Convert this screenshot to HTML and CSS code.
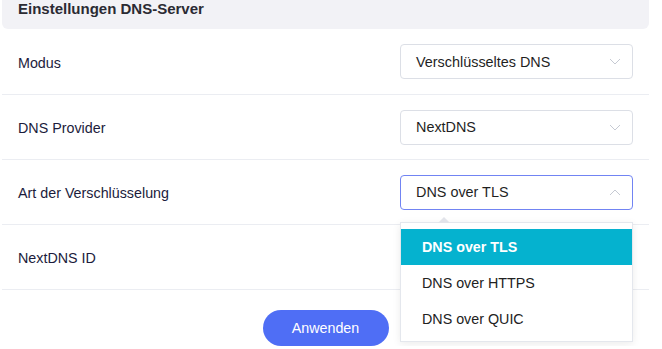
FILE: index.html
```html
<!DOCTYPE html>
<html lang="de">
<head>
    <meta charset="UTF-8">
    <meta name="viewport" content="width=device-width, initial-scale=1.0">
    <title>Einstellungen DNS-Server</title>
    <link rel="stylesheet" href="styles.css">
</head>
<body>

    <div class="panel">
        <!-- Header -->
        <div class="panel-header">Einstellungen DNS-Server</div>

        <div class="row first">
            <span class="label">Modus</span>
            <div class="select">
                <span>Verschlüsseltes DNS</span>
                <svg class="chevron" width="12" height="7" viewBox="0 0 12 7"><polyline points="1,1 6,6 11,1"/></svg>
            </div>
        </div>

        <div class="row">
            <span class="label">DNS Provider</span>
            <div class="select">
                <span>NextDNS</span>
                <svg class="chevron" width="12" height="7" viewBox="0 0 12 7"><polyline points="1,1 6,6 11,1"/></svg>
            </div>
        </div>

        <div class="row">
            <span class="label">Art der Verschlüsselung</span>
            <div class="select open">
                <span>DNS over TLS</span>
                <svg class="chevron" width="12" height="7" viewBox="0 0 12 7"><polyline points="1,6 6,1 11,6"/></svg>

                <!-- Dropdown menu -->
                <div class="dropdown">
                    <div class="dropdown-arrow"></div>
                    <div class="option selected">DNS over TLS</div>
                    <div class="option">DNS over HTTPS</div>
                    <div class="option">DNS over QUIC</div>
                </div>
            </div>
        </div>

        <div class="row">
            <span class="label">NextDNS ID</span>
            <div class="select"></div>
        </div>

        <div class="actions">
            <button class="btn">Anwenden</button>
        </div>
    </div>

</body>
</html>
```

FILE: styles.css
```css
body {
    margin: 0;
    font-family: "Liberation Sans", Arial, sans-serif;
    background: #fff;
}
.panel {
    width: 647px;
    margin-left: 2px;
}
.panel-header {
    background: #f2f2f6;
    border-radius: 0 0 6px 6px;
    font-size: 15px;
    font-weight: bold;
    color: #2b2b33;
    line-height: 18px;
    padding: 0 16px 11px;
}
.row {
    display: flex;
    justify-content: space-between;
    align-items: center;
    height: 64px;
    padding: 0 16px;
    border-bottom: 1px solid #ebedf2;
}
.row.first {
    height: 65px;
}
.label {
    font-size: 14.3px;
    color: #1c1c3c;
    margin-top: 2px;
}
.select {
    position: relative;
    box-sizing: border-box;
    width: 233px;
    height: 35px;
    border: 1px solid #dcdfe6;
    border-radius: 4px;
    display: flex;
    align-items: center;
    justify-content: space-between;
    padding: 0 11px 0 15px;
    font-size: 14.4px;
    color: #1f1f1f;
}
.select.open {
    border-color: #7184f3;
}
.chevron {
    fill: none;
    stroke: #c6cad3;
    stroke-width: 1;
}
.dropdown {
    position: absolute;
    top: 46px;
    left: -1px;
    width: 233px;
    box-sizing: border-box;
    background: #fff;
    border: 1px solid #e4e7ed;
    box-shadow: 0 2px 8px rgba(0, 0, 0, 0.08);
    padding: 6px 0 4px;
    z-index: 10;
}
.dropdown-arrow {
    position: absolute;
    top: -6px;
    left: 37px;
    width: 0;
    height: 0;
    border-left: 6px solid transparent;
    border-right: 6px solid transparent;
    border-bottom: 6px solid #e2e4ea;
}
.option {
    height: 36px;
    line-height: 36px;
    padding: 0 21px;
    font-size: 14.3px;
    color: #222;
}
.option.selected {
    background: #05b2cf;
    color: #fff;
    font-weight: bold;
}
.actions {
    display: flex;
    justify-content: center;
    padding-top: 20px;
}
.btn {
    width: 126px;
    height: 36px;
    border: none;
    border-radius: 18px;
    background: #4f6ef5;
    color: #fff;
    font-family: "Liberation Sans", Arial, sans-serif;
    font-size: 14.3px;
}
```
